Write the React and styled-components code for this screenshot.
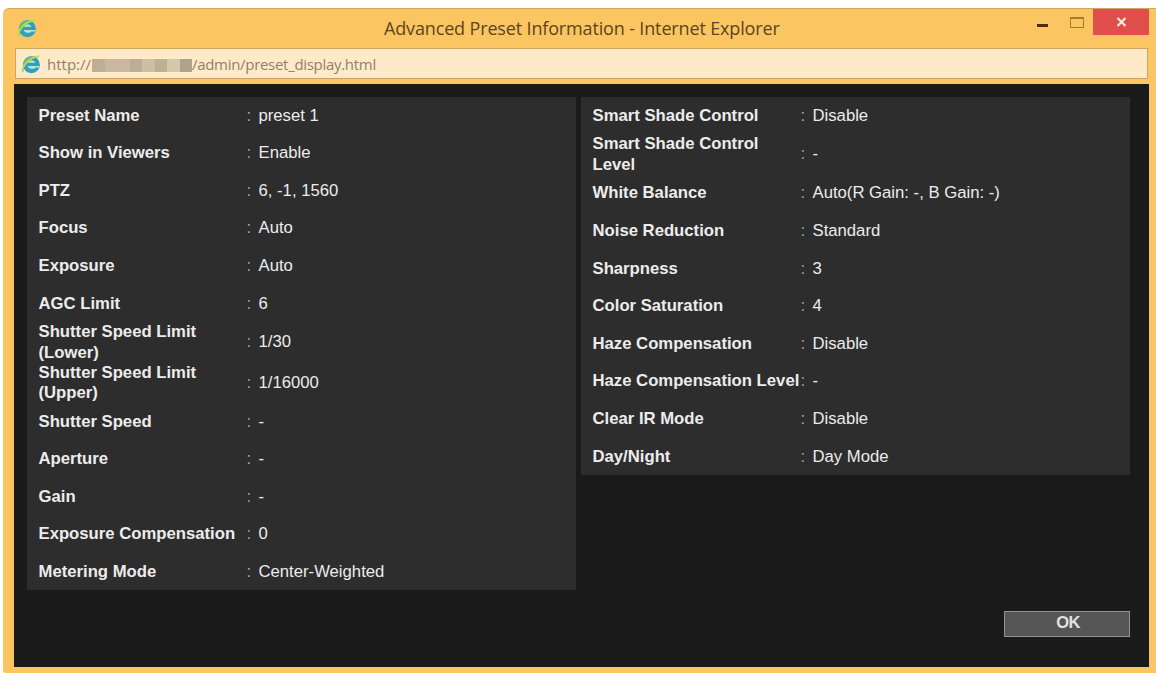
import React from 'react'
import styled, { createGlobalStyle } from 'styled-components'

const leftRows = [
  { label: 'Preset Name', value: 'preset 1' },
  { label: 'Show in Viewers', value: 'Enable' },
  { label: 'PTZ', value: '6, -1, 1560' },
  { label: 'Focus', value: 'Auto' },
  { label: 'Exposure', value: 'Auto' },
  { label: 'AGC Limit', value: '6' },
  { label: 'Shutter Speed Limit (Lower)', value: '1/30', tall: true },
  { label: 'Shutter Speed Limit (Upper)', value: '1/16000', tall: true },
  { label: 'Shutter Speed', value: '-' },
  { label: 'Aperture', value: '-' },
  { label: 'Gain', value: '-' },
  { label: 'Exposure Compensation', value: '0' },
  { label: 'Metering Mode', value: 'Center-Weighted' },
]

const rightRows = [
  { label: 'Smart Shade Control', value: 'Disable' },
  { label: 'Smart Shade Control Level', value: '-', tall: true },
  { label: 'White Balance', value: 'Auto(R Gain: -, B Gain: -)' },
  { label: 'Noise Reduction', value: 'Standard' },
  { label: 'Sharpness', value: '3' },
  { label: 'Color Saturation', value: '4' },
  { label: 'Haze Compensation', value: 'Disable' },
  { label: 'Haze Compensation Level', value: '-' },
  { label: 'Clear IR Mode', value: 'Disable' },
  { label: 'Day/Night', value: 'Day Mode' },
]

// hidden part of the address
const hostBlocks = ['#bdae94', '#cab79f', '#cab79f', '#bfac94', '#cdbfa3', '#bcb095', '#d5c8aa', '#aea48c']

function BrowserIcon({ size }) {
  return (
    <svg width={size} height={size} viewBox="0 0 20 20">
      <circle cx="10.4" cy="10.8" r="8.5" fill="#2f9fc4" />
      <path d="M2 11C1.8 4.6 8 1.6 13.4 2.8L7 7.6z" fill="#5fbf7a" />
      <path d="M6.6 8.8a4.4 4.4 0 0 1 8 0z" fill="#bfe6c4" />
      <path d="M6.6 12h11.6v1.4h-3.6c-1.8 2.2-6.6 2-8-1.4z" fill="#bfe6c4" />
      <path d="M2.4 18C-.4 14 7 3.4 17.8 2.2" fill="none" stroke="#b9d94e" strokeWidth="1.9" />
    </svg>
  )
}

function PresetPanel({ rows }) {
  return (
    <Panel>
      {rows.map((row) => (
        <Row key={row.label} $tall={row.tall}>
          <Label $wrap={row.tall}>{row.label}</Label>
          <Colon>:</Colon>
          <Value>{row.value}</Value>
        </Row>
      ))}
    </Panel>
  )
}

function App() {
  return (
    <>
      <GlobalStyle />
      <Page>
        <Window>
          <TitleBar>
            <BrowserIcon size={20} />
            <Title>Advanced Preset Information - Internet Explorer</Title>
            <Controls>
              <MinimizeButton aria-label="Minimize" />
              <MaximizeButton aria-label="Maximize" />
              <CloseButton aria-label="Close">
                <svg width="11" height="10" viewBox="0 0 11 10">
                  <path d="M1.5 1l8 8M9.5 1l-8 8" stroke="#fbe9dc" strokeWidth="2.2" />
                </svg>
              </CloseButton>
            </Controls>
          </TitleBar>
          <AddressBar>
            <BrowserIcon size={20} />
            <Url>http://</Url>
            <HiddenHost>
              {hostBlocks.map((color, i) => <HostBlock key={i} $color={color} />)}
            </HiddenHost>
            <Url>/admin/preset_display.html</Url>
          </AddressBar>
          <Content>
            <Panels>
              <PresetPanel rows={leftRows} />
              <PresetPanel rows={rightRows} />
            </Panels>
            <Footer>
              <OkButton>OK</OkButton>
            </Footer>
          </Content>
        </Window>
      </Page>
    </>
  )
}

export default App

const GlobalStyle = createGlobalStyle`
  * {
    box-sizing: border-box;
  }
  body {
    margin: 0;
    background: #fff;
    overflow: hidden;
  }
`

const Page = styled.div`
  height: 673px;
  padding: 8px 0 0 3px;
`

const Window = styled.div`
  display: flex;
  flex-direction: column;
  height: 665px;
  padding: 0 7px 6px 11px;
  background: #fbc662;
  border-top: 1px solid #d3a85c;
  border-radius: 6px 0 0 3px;
`

const TitleBar = styled.div`
  display: flex;
  height: 39px;
  padding: 9px 0 0 3px;
`

const Title = styled.div`
  flex: 1;
  padding-left: 347px;
  margin-top: -2px;
  font: 18px/25px 'Open Sans', sans-serif;
  letter-spacing: -0.15px;
  white-space: nowrap;
  color: #5c4420;
`

const Controls = styled.div`
  display: flex;
  margin-top: -9px;
`

const MinimizeButton = styled.button`
  width: 11px;
  height: 3px;
  margin: 15px 22px 0 0;
  padding: 0;
  border: 0;
  background: #4a2c10;
`

const MaximizeButton = styled.button`
  width: 14px;
  height: 11px;
  margin: 8px 9px 0 0;
  padding: 0;
  border: 1px solid #a37b32;
  border-top-width: 2px;
  background: transparent;
`

const CloseButton = styled.button`
  display: flex;
  align-items: center;
  justify-content: center;
  width: 56px;
  height: 26px;
  padding: 0 0 0 1px;
  border: 0;
  background: #e04e4c;
`

const AddressBar = styled.div`
  display: flex;
  align-items: center;
  height: 31px;
  margin: 0 1px 5px;
  padding-left: 5px;
  background: #feeac8;
  border: 1px solid #cfa45c;
`

const Url = styled.span`
  font: 15px/20px 'Open Sans', sans-serif;
  letter-spacing: -0.3px;
  color: #8f826c;
  white-space: nowrap;
  &:first-of-type {
    width: 45px;
    margin-left: 6px;
    letter-spacing: 0;
  }
`

const HiddenHost = styled.div`
  display: flex;
  width: 100px;
  height: 13px;
  margin-top: 3px;
`

const HostBlock = styled.i`
  flex: 1;
  background: ${(props) => props.$color};
`

const Content = styled.main`
  flex: 1;
  padding: 13px 19px 0 13px;
  background: #1a1a1a;
  font-family: 'Liberation Sans', Arial, sans-serif;
`

const Panels = styled.div`
  display: flex;
  align-items: flex-start;
  justify-content: space-between;
  height: 514px;
`

const Panel = styled.div`
  width: 549px;
  background: #2d2d2d;
`

const Row = styled.div`
  display: flex;
  align-items: center;
  height: ${(props) => (props.$tall ? '40.3px' : '37.6px')};
  padding-left: 11.5px;
  font-size: 16.7px;
  line-height: 20.5px;
  color: #ececec;
  &:last-child {
    margin-bottom: -0.9px;
  }
`

const Label = styled.div`
  width: 208px;
  padding-right: ${(props) => (props.$wrap ? '30px' : '0')};
  font-weight: bold;
  white-space: ${(props) => (props.$wrap ? 'normal' : 'nowrap')};
`

const Colon = styled.span`
  width: 12px;
  color: #a5a5a5;
`

const Value = styled.span`
  white-space: nowrap;
`

const Footer = styled.div`
  display: flex;
  justify-content: flex-end;
`

const OkButton = styled.button`
  width: 126px;
  height: 26px;
  padding: 0 0 3px 2px;
  border: 1px solid #929292;
  background: #555;
  font: bold 16.5px 'Liberation Sans', Arial, sans-serif;
  letter-spacing: -0.5px;
  color: #e2e2e2;
`
